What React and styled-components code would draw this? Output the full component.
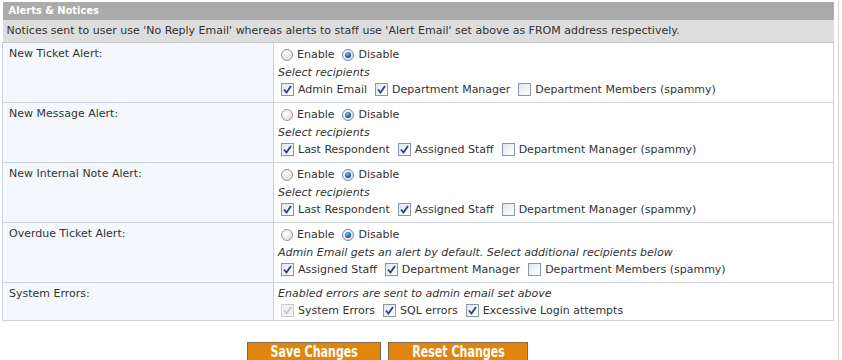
import React from 'react';
import styled, {createGlobalStyle, css} from 'styled-components';

const GlobalStyle = createGlobalStyle`
    body {
        margin: 0;
        background: #fff;
        font-family: "DejaVu Sans", Verdana, sans-serif;
        font-size: 11px;
        color: #333;
    }
`

const Page = styled.div`
    width: 836px;
    height: 358px;
    padding: 2px 0 0 2px;
    border-right: 1px solid #d6d6d6;
    overflow: hidden;
`

const Table = styled.table`
    width: 832px;
    table-layout: fixed;
    border-collapse: collapse;
    border-spacing: 0;
`

const LabelCol = styled.col`
    width: 271px;
`

const HeaderCell = styled.th`
    background: #ababab;
    color: #fff;
    font-family: "DejaVu Sans Condensed", "DejaVu Sans", sans-serif;
    font-weight: bold;
    font-size: 11px;
    text-align: left;
    height: 18px;
    padding: 0 6px;
    line-height: 18px;
`

const NoticeCell = styled.td`
    background: #dddddd;
    height: 22px;
    padding: 0 4px;
    line-height: 22px;
    border-bottom: 1px solid #c8c8c8;
    white-space: nowrap;
`

const Row = styled.tr`
    border-top: 1px solid #cdd3dc;
    border-bottom: 1px solid #cdd3dc;
`

const LabelCell = styled.td`
    background: #f4f7fb;
    vertical-align: top;
    padding: 4px 6px 0;
    line-height: 14px;
    border-right: 1px solid #cdd3dc;
    border-left: 1px solid #cdd3dc;
`

const ValueCell = styled.td`
    vertical-align: top;
    padding: 2px 4px ${p => p.last ? 0 : 3}px;
    border-right: 1px solid #cdd3dc;
`

const Line = styled.div`
    display: flex;
    align-items: center;
    height: 19px;
    white-space: nowrap;
`

const Hint = styled(Line)`
    font-style: italic;
    height: 16px;
`

const Option = styled.label`
    display: inline-flex;
    align-items: center;
    margin-left: 3px;
    margin-right: 5px;
    gap: 4px;
`

const RadioBox = styled.span`
    width: 12px;
    height: 12px;
    border-radius: 50%;
    box-sizing: border-box;
    border: 1px solid #9a9a9a;
    background: radial-gradient(circle at 40% 35%, #ffffff 0%, #e6e6e6 60%, #cfcfcf 100%);
    display: inline-flex;
    align-items: center;
    justify-content: center;
    ${p => p.on && css`
        border-color: #6f8fb5;
        &::after {
            content: '';
            width: 6px;
            height: 6px;
            border-radius: 50%;
            background: radial-gradient(circle at 40% 35%, #8cc4ef 0%, #1a5fa3 55%, #0a3566 100%);
        }
    `}
`

const CheckBox = styled.span`
    width: 13px;
    height: 13px;
    box-sizing: border-box;
    border: 1px solid #8a97a8;
    background: linear-gradient(135deg, #e3e6ea 0%, #f7f8fa 70%, #ffffff 100%);
    display: inline-flex;
    align-items: center;
    justify-content: center;
    ${p => p.disabled && css`
        border-color: #c8cbd0;
        background: #f1f2f4;
    `}
`

const ButtonBar = styled.div`
    display: flex;
    gap: 7px;
    margin: 21px 0 0 245px;
`

const Button = styled.button`
    width: ${p => p.w}px;
    height: 22px;
    background: #e2850c;
    border: 1px solid #7a6a55;
    color: #fff;
    font-family: "DejaVu Sans Condensed", "Liberation Sans", sans-serif;
    font-weight: bold;
    font-size: 15px;
    line-height: 18px;
    padding: 0 0 2px;
    display: flex;
    align-items: center;
    justify-content: center;
    cursor: pointer;
`

const ButtonText = styled.span`
    display: inline-block;
    transform: scaleX(0.82);
`

function Radio({on, children}){
    return (
        <Option>
            <RadioBox on={on ? 1 : 0}/>
            {children}
        </Option>
    )
}

function Check({checked, disabled, children}){
    return (
        <Option>
            <CheckBox disabled={disabled}>
                {checked &&
                    <svg width="9" height="9" viewBox="0 0 9 9">
                        <path d="M1 4.5 L3.5 7.5 L8 1" fill="none"
                            stroke={disabled ? '#c2c6cc' : '#2b3f8f'} strokeWidth="1.8"/>
                    </svg>}
            </CheckBox>
            {children}
        </Option>
    )
}

const alerts = [
    {label: 'New Ticket Alert:', hint: 'Select recipients',
        boxes: [['Admin Email', true], ['Department Manager', true], ['Department Members (spammy)', false]]},
    {label: 'New Message Alert:', hint: 'Select recipients',
        boxes: [['Last Respondent', true], ['Assigned Staff', true], ['Department Manager (spammy)', false]]},
    {label: 'New Internal Note Alert:', hint: 'Select recipients',
        boxes: [['Last Respondent', true], ['Assigned Staff', true], ['Department Manager (spammy)', false]]},
    {label: 'Overdue Ticket Alert:', hint: 'Admin Email gets an alert by default. Select additional recipients below',
        boxes: [['Assigned Staff', true], ['Department Manager', true], ['Department Members (spammy)', false]]},
]

export default function App(){
    return (
        <Page>
            <GlobalStyle/>
            <Table>
                <colgroup>
                    <LabelCol/>
                    <col/>
                </colgroup>
                <tbody>
                    <tr><HeaderCell colSpan={2}>Alerts &amp; Notices</HeaderCell></tr>
                    <tr>
                        <NoticeCell colSpan={2}>
                            Notices sent to user use 'No Reply Email' whereas alerts to staff use 'Alert Email' set above as FROM address respectively.
                        </NoticeCell>
                    </tr>
                    {alerts.map(a =>
                        <Row key={a.label}>
                            <LabelCell>{a.label}</LabelCell>
                            <ValueCell>
                                <Line>
                                    <Radio>Enable</Radio>
                                    <Radio on>Disable</Radio>
                                </Line>
                                <Hint>{a.hint}</Hint>
                                <Line>
                                    {a.boxes.map(([name, on]) =>
                                        <Check key={name} checked={on}>{name}</Check>)}
                                </Line>
                            </ValueCell>
                        </Row>
                    )}
                    <Row>
                        <LabelCell>System Errors:</LabelCell>
                        <ValueCell last>
                            <Hint>Enabled errors are sent to admin email set above</Hint>
                            <Line>
                                <Check checked disabled>System Errors</Check>
                                <Check checked>SQL errors</Check>
                                <Check checked>Excessive Login attempts</Check>
                            </Line>
                        </ValueCell>
                    </Row>
                </tbody>
            </Table>
            <ButtonBar>
                <Button w={134}><ButtonText>Save Changes</ButtonText></Button>
                <Button w={140}><ButtonText>Reset Changes</ButtonText></Button>
            </ButtonBar>
        </Page>
    )
}
